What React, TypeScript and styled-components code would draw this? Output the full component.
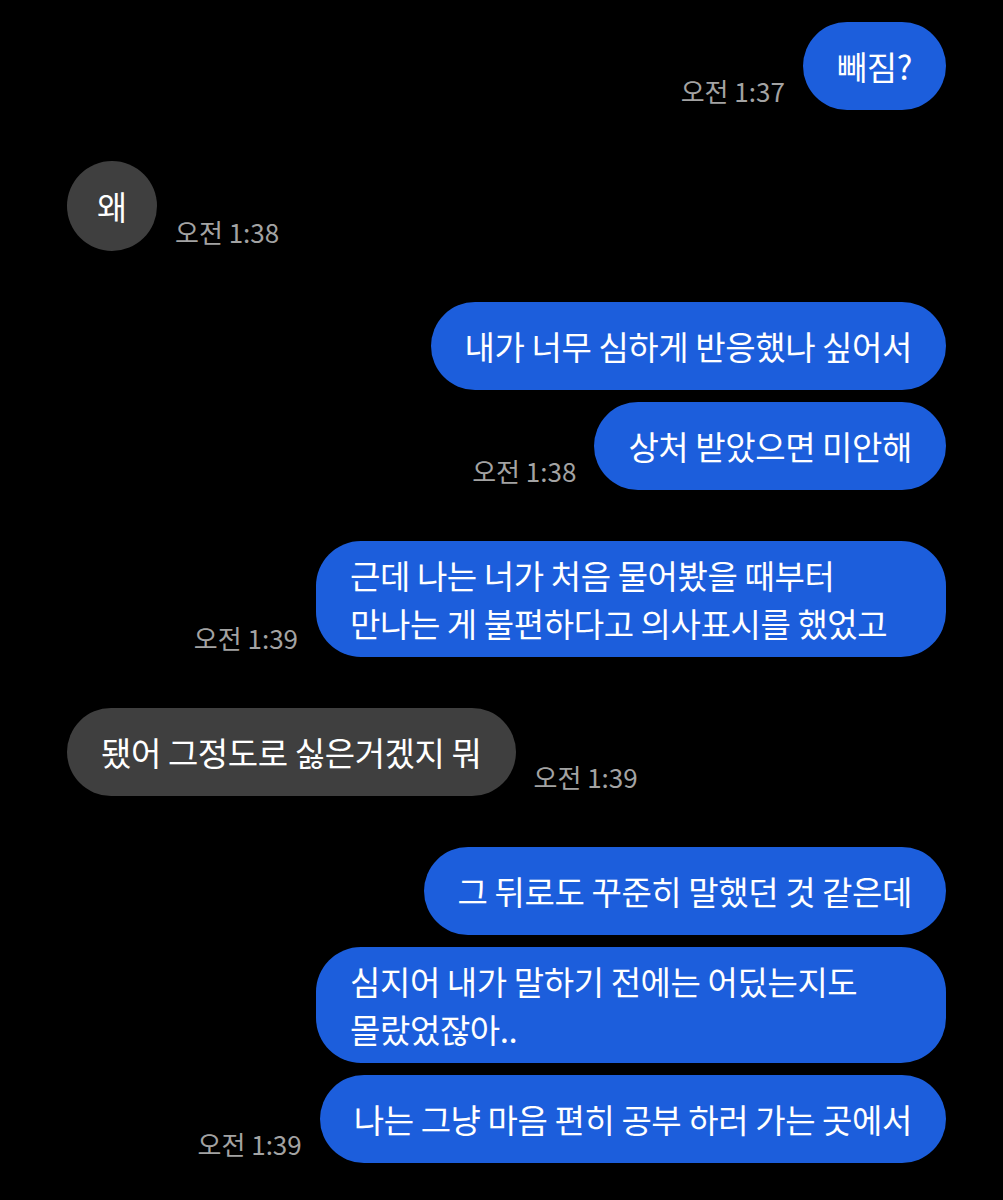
import React from 'react'
import styled, { createGlobalStyle } from 'styled-components'

type Side = 'me' | 'them'

type Message = {
  side: Side
  time: string
  bubbles: string[][]
}

const messages: Message[] = [
  { side: 'me', time: '오전 1:37', bubbles: [['빼짐?']] },
  { side: 'them', time: '오전 1:38', bubbles: [['왜']] },
  {
    side: 'me',
    time: '오전 1:38',
    bubbles: [['내가 너무 심하게 반응했나 싶어서'], ['상처 받았으면 미안해']],
  },
  {
    side: 'me',
    time: '오전 1:39',
    bubbles: [['근데 나는 너가 처음 물어봤을 때부터', '만나는 게 불편하다고 의사표시를 했었고']],
  },
  { side: 'them', time: '오전 1:39', bubbles: [['됐어 그정도로 싫은거겠지 뭐']] },
  {
    side: 'me',
    time: '오전 1:39',
    bubbles: [
      ['그 뒤로도 꾸준히 말했던 것 같은데'],
      ['심지어 내가 말하기 전에는 어딨는지도', '몰랐었잖아..'],
      ['나는 그냥 마음 편히 공부 하러 가는 곳에서'],
    ],
  },
]

function App() {
  return (
    <>
      <GlobalStyle />
      <Chat>
        {messages.map((msg, i) => (
          <Group key={i}>
            {msg.bubbles.map((lines, j) => {
              const last = j === msg.bubbles.length - 1
              return (
                <Row key={j} $side={msg.side}>
                  {last && msg.side === 'me' && <Time>{msg.time}</Time>}
                  <Bubble
                    $side={msg.side}
                    $multi={lines.length > 1}
                    $short={lines[0].length === 1}
                  >
                    {lines.map((line, k) => (
                      <Line key={k}>{line}</Line>
                    ))}
                  </Bubble>
                  {last && msg.side === 'them' && <Time>{msg.time}</Time>}
                </Row>
              )
            })}
          </Group>
        ))}
      </Chat>
    </>
  )
}

const GlobalStyle = createGlobalStyle`
  html, body {
    margin: 0;
    padding: 0;
    background: #000;
  }
  body {
    font-family: "Noto Sans CJK KR", "Noto Sans", sans-serif;
  }
`

const Chat = styled.div`
  width: 1003px;
  height: 1200px;
  box-sizing: border-box;
  padding: 22px 57px 0 67px;
  display: flex;
  flex-direction: column;
  gap: 51px;
  background: #000;
  overflow: hidden;
`

const Group = styled.div`
  display: flex;
  flex-direction: column;
  gap: 12px;
`

const Row = styled.div<{ $side: Side }>`
  display: flex;
  align-items: flex-end;
  justify-content: ${(p) => (p.$side === 'me' ? 'flex-end' : 'flex-start')};
  gap: 18px;
`

const Bubble = styled.div<{ $side: Side; $multi: boolean; $short: boolean }>`
  width: ${(p) => (p.$multi ? '630px' : 'auto')};
  min-height: ${(p) => (p.$short ? '90px' : '88px')};
  box-sizing: border-box;
  padding: ${(p) => (p.$multi ? '10px 34px' : p.$short ? '0 30px' : '0 34px')};
  display: flex;
  flex-direction: column;
  justify-content: center;
  border-radius: 45px;
  background: ${(p) => (p.$side === 'me' ? '#1c5edc' : '#3f3f3f')};
  color: #fff;
  font-size: 33px;
  line-height: 48px;
  letter-spacing: -0.4px;
  white-space: nowrap;
`

const Line = styled.div``

const Time = styled.div`
  margin-bottom: 4px;
  color: #a3a3a3;
  font-size: 26px;
  line-height: 30px;
  white-space: nowrap;
`

export default App
